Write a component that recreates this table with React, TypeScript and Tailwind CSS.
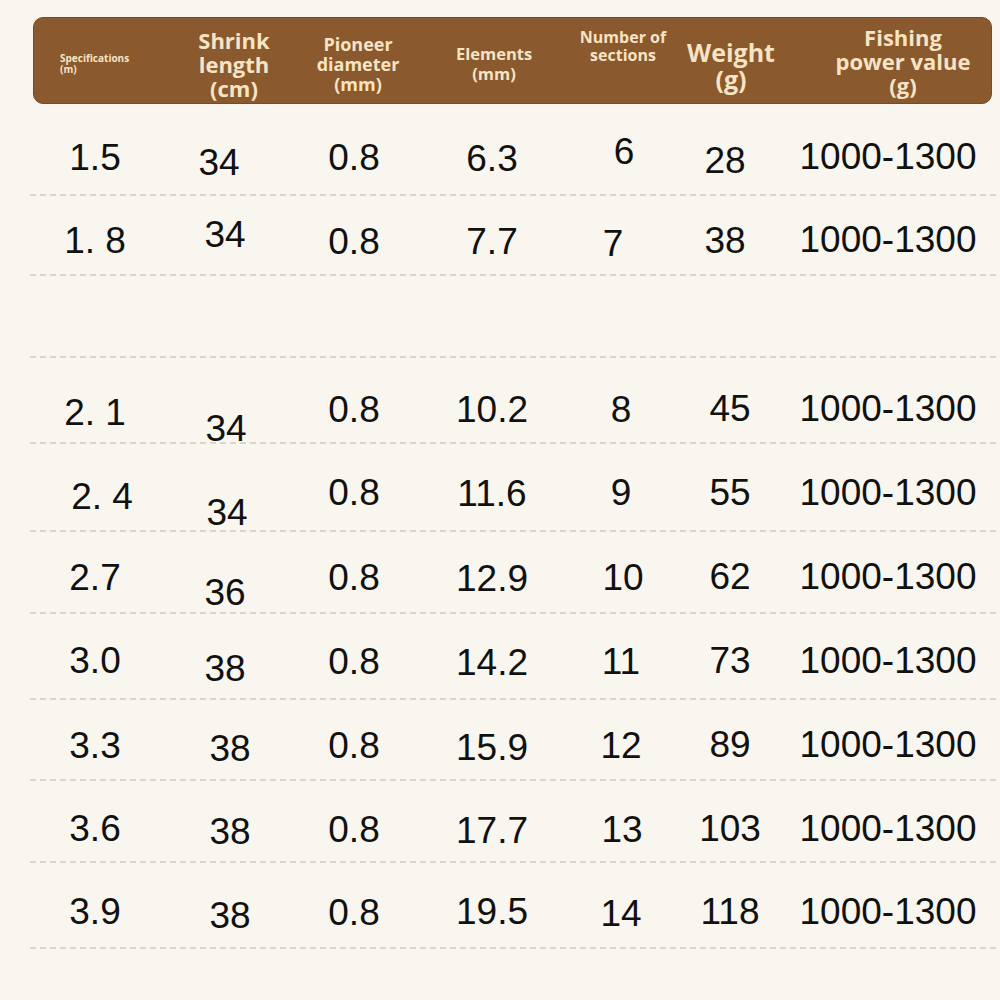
import React from "react";

type Cell = [string, string];

const rows: { h: string; cells: Cell[] }[] = [
  {
    h: "h-[92px]",
    cells: [
      ["1.5", "pt-[35px]"],
      ["34", "pt-[40px] pr-[12px]"],
      ["0.8", "pt-[35px]"],
      ["6.3", "pt-[36px]"],
      ["6", "pt-[29px] pl-[6px]"],
      ["28", "pt-[38px] pr-[6px]"],
      ["1000-1300", "pt-[34px]"],
    ],
  },
  {
    h: "h-[80px]",
    cells: [
      ["1. 8", "pt-[26px]"],
      ["34", "pt-[20px]"],
      ["0.8", "pt-[27px]"],
      ["7.7", "pt-[27px]"],
      ["7", "pt-[29px] pr-[16px]"],
      ["38", "pt-[26px] pr-[6px]"],
      ["1000-1300", "pt-[25px]"],
    ],
  },
  { h: "h-[82px]", cells: [] },
  {
    h: "h-[86px]",
    cells: [
      ["2. 1", "pt-[36px]"],
      ["34", "pt-[52px] pl-[2px]"],
      ["0.8", "pt-[33px]"],
      ["10.2", "pt-[33px]"],
      ["8", "pt-[33px]"],
      ["45", "pt-[32px] pl-[4px]"],
      ["1000-1300", "pt-[32px]"],
    ],
  },
  {
    h: "h-[88px]",
    cells: [
      ["2. 4", "pt-[34px] pl-[14px]"],
      ["34", "pt-[50px] pl-[4px]"],
      ["0.8", "pt-[30px]"],
      ["11.6", "pt-[31px]"],
      ["9", "pt-[30px]"],
      ["55", "pt-[30px] pl-[4px]"],
      ["1000-1300", "pt-[30px]"],
    ],
  },
  {
    h: "h-[82px]",
    cells: [
      ["2.7", "pt-[27px]"],
      ["36", "pt-[42px]"],
      ["0.8", "pt-[27px]"],
      ["12.9", "pt-[28px]"],
      ["10", "pt-[27px] pl-[4px]"],
      ["62", "pt-[26px] pl-[4px]"],
      ["1000-1300", "pt-[26px]"],
    ],
  },
  {
    h: "h-[86px]",
    cells: [
      ["3.0", "pt-[28px]"],
      ["38", "pt-[36px]"],
      ["0.8", "pt-[29px]"],
      ["14.2", "pt-[30px]"],
      ["11", "pt-[29px]"],
      ["73", "pt-[28px] pl-[4px]"],
      ["1000-1300", "pt-[28px]"],
    ],
  },
  {
    h: "h-[81px]",
    cells: [
      ["3.3", "pt-[27px]"],
      ["38", "pt-[30px] pl-[10px]"],
      ["0.8", "pt-[27px]"],
      ["15.9", "pt-[29px]"],
      ["12", "pt-[27px]"],
      ["89", "pt-[26px] pl-[4px]"],
      ["1000-1300", "pt-[26px]"],
    ],
  },
  {
    h: "h-[82px]",
    cells: [
      ["3.6", "pt-[29px]"],
      ["38", "pt-[32px] pl-[10px]"],
      ["0.8", "pt-[30px]"],
      ["17.7", "pt-[31px]"],
      ["13", "pt-[30px] pl-[2px]"],
      ["103", "pt-[29px] pl-[4px]"],
      ["1000-1300", "pt-[29px]"],
    ],
  },
  {
    h: "h-[86px]",
    cells: [
      ["3.9", "pt-[30px]"],
      ["38", "pt-[34px] pl-[10px]"],
      ["0.8", "pt-[31px]"],
      ["19.5", "pt-[30px]"],
      ["14", "pt-[32px]"],
      ["118", "pt-[30px] pl-[4px]"],
      ["1000-1300", "pt-[30px]"],
    ],
  },
];

const bodyFont = { fontFamily: '"Liberation Sans", Arial, sans-serif' };
const headFont = { fontFamily: '"Open Sans", "Noto Sans", sans-serif' };

export default function App() {
  return (
    <div className="w-[1000px] h-[1000px] bg-[#f8f6ee] overflow-hidden pt-[17px]">
      <div
        className="mx-[33px] w-[959px] h-[87px] rounded-[10px] bg-[#8a592e] border border-[#784b25] text-[#f6e4c4] font-bold grid grid-cols-[137px_126px_122px_150px_108px_108px_1fr] items-center pt-[6px]"
        style={headFont}
      >
        <div className="pl-[26px] text-[10px] leading-[11px]">
          <div>Specifications</div>
          <div>(m)</div>
        </div>
        <div className="text-center text-[22px] leading-[24px]">
          <div>Shrink</div>
          <div>length</div>
          <div>(cm)</div>
        </div>
        <div className="text-center text-[18px] leading-[20px]">
          <div>Pioneer</div>
          <div>diameter</div>
          <div>(mm)</div>
        </div>
        <div className="text-center text-[16.5px] leading-[20px]">
          <div>Elements</div>
          <div>(mm)</div>
        </div>
        <div className="self-start pt-[4px] text-center text-[16px] leading-[18px]">
          <div>Number of</div>
          <div>sections</div>
        </div>
        <div className="text-center text-[25px] leading-[27px] pt-[4px]">
          <div>Weight</div>
          <div>(g)</div>
        </div>
        <div className="text-center text-[22px] leading-[24px] pl-[30px] pb-[6px]">
          <div>Fishing</div>
          <div>power value</div>
          <div>(g)</div>
        </div>
      </div>

      <div className="mx-[30px] w-[966px]" style={bodyFont}>
        {rows.map((r, i) => (
          <div
            key={i}
            className={`${r.h} border-b-2 border-dashed border-[#dcd6ca] grid grid-cols-[130px_130px_128px_148px_110px_104px_1fr] text-[37px] leading-[37px] text-[#111111]`}
          >
            {r.cells.map(([t, c], j) => (
              <div key={j} className={`text-center whitespace-pre ${c}`}>
                {t}
              </div>
            ))}
          </div>
        ))}
      </div>
    </div>
  );
}
